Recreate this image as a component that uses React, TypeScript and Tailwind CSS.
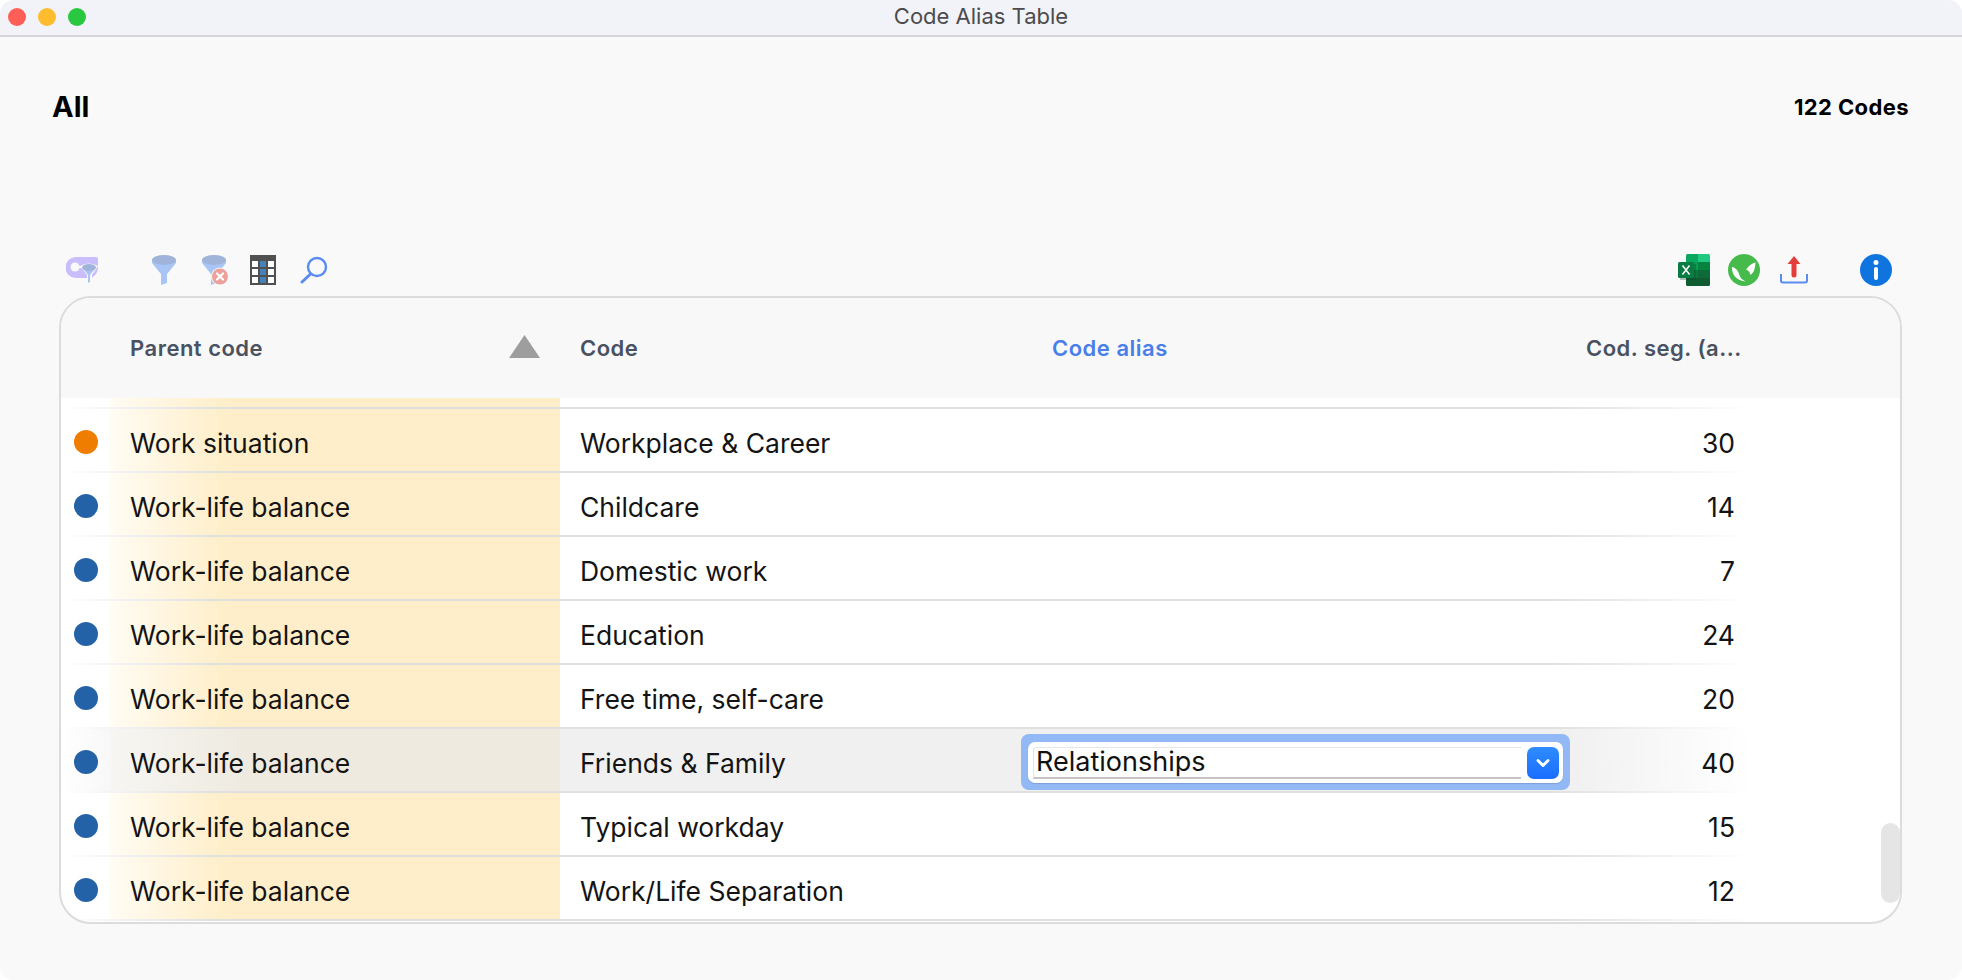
import { ChevronDown } from 'lucide-react'

const rows = [
  { parent: 'Work situation', code: 'Workplace & Career', count: 30, dot: 'bg-[#ef7d00]' },
  { parent: 'Work-life balance', code: 'Childcare', count: 14, dot: 'bg-[#2462a8]' },
  { parent: 'Work-life balance', code: 'Domestic work', count: 7, dot: 'bg-[#2462a8]' },
  { parent: 'Work-life balance', code: 'Education', count: 24, dot: 'bg-[#2462a8]' },
  { parent: 'Work-life balance', code: 'Free time, self-care', count: 20, dot: 'bg-[#2462a8]' },
  { parent: 'Work-life balance', code: 'Friends & Family', count: 40, dot: 'bg-[#2462a8]', alias: 'Relationships' },
  { parent: 'Work-life balance', code: 'Typical workday', count: 15, dot: 'bg-[#2462a8]' },
  { parent: 'Work-life balance', code: 'Work/Life Separation', count: 12, dot: 'bg-[#2462a8]' },
]

const line = 'h-[2px] w-[1690px] shrink-0 bg-[linear-gradient(to_right,#ffffff00,#e0e0e0_9%,#e0e0e0_88%,#ffffff00)]'
const yellow = 'bg-[linear-gradient(to_right,#fffcf3,#ffeec9_26%)]'

function AliasFilterIcon() {
  return (
    <svg width="32" height="26" viewBox="0 0 32 26">
      <path d="M10 0h20a2 2 0 0 1 2 2v8c0 6-4 11-9 11H10a10.500 10.500 0 0 1 0-21Z" fill="#c9bdfb" />
      <circle cx="9" cy="10" r="4.500" fill="#f9f9f9" />
      <path d="M9 10h8" stroke="#f9f9f9" strokeWidth="2" />
      <path d="M14 9q9-5 18 0l-6 9v7l-5 1v-8Z" fill="#f9f9f9" />
      <path d="M16 10.500h14l-6 7.500v7l-2 1v-8Z" fill="#a9c5f5" />
      <ellipse cx="23" cy="10.500" rx="7" ry="3.500" fill="#a0b4da" />
    </svg>
  )
}

function FunnelIcon() {
  return (
    <svg width="24" height="30" viewBox="0 0 24 30">
      <path d="M0 5h24v3L15 19v9l-6 2V19L0 8Z" fill="#a9c5f5" />
      <ellipse cx="12" cy="5" rx="12" ry="5" fill="#a0b4da" />
    </svg>
  )
}

function FunnelClearIcon() {
  return (
    <svg width="27" height="30" viewBox="0 0 27 30">
      <path d="M0 5h24v3L15 19v9l-6 2V19L0 8Z" fill="#a9c5f5" />
      <ellipse cx="12" cy="5" rx="12" ry="5" fill="#a0b4da" />
      <circle cx="18" cy="21.500" r="9" fill="#f9f9f9" />
      <circle cx="18" cy="21.500" r="8" fill="#eda09c" />
      <path d="M15 18.500l6 6m0-6-6 6" stroke="#fff" strokeWidth="2.200" strokeLinecap="round" />
    </svg>
  )
}

function GridIcon() {
  const cells = [0, 1, 2]
  return (
    <svg width="26" height="30" viewBox="0 0 26 30">
      <rect width="26" height="30" fill="#505050" />
      {cells.map(r => cells.map(c => (
        <rect key={`${r}-${c}`} x={2 + c * 8} y={6 + r * 8} width="6" height="6" fill={c === 1 ? '#4682b8' : '#fff'} />
      )))}
    </svg>
  )
}

function SearchIcon() {
  return (
    <svg width="28" height="28" viewBox="0 0 28 28" fill="none" stroke="#5a8cf0">
      <circle cx="17" cy="11" r="9" strokeWidth="2.400" />
      <path d="M10.500 18 2 26" strokeWidth="3" strokeLinecap="round" />
    </svg>
  )
}

function ExcelIcon() {
  return (
    <svg width="32" height="32" viewBox="0 0 32 32">
      <path d="M9.500 0H20v8H8V1.500A1.500 1.500 0 0 1 9.500 0Z" fill="#0aa760" />
      <path d="M20 0h10.500A1.500 1.500 0 0 1 32 1.500V8H20Z" fill="#1fc97f" />
      <rect x="8" y="8" width="12" height="8" fill="#0a9c55" />
      <rect x="20" y="8" width="12" height="8" fill="#07833f" />
      <rect x="8" y="16" width="12" height="8" fill="#0b7a40" />
      <rect x="20" y="16" width="12" height="8" fill="#0c6b38" />
      <path d="M8 24h24v6.500a1.500 1.500 0 0 1-1.500 1.500h-21A1.500 1.500 0 0 1 8 30.500Z" fill="#0f5c33" />
      <rect x="2" y="10" width="16" height="16" fill="#0b3f24" opacity="0.3" />
      <rect y="8" width="16" height="16" rx="1.500" fill="#0a7c43" />
      <path d="M4.500 11.500 11.500 20.500M11.500 11.500 4.500 20.500" stroke="#fff" strokeWidth="1.500" />
    </svg>
  )
}

function GlobeIcon() {
  return (
    <svg width="32" height="32" viewBox="0 0 32 32">
      <circle cx="16" cy="16" r="16" fill="#46bb4c" />
      <path d="M4 13c-.2 3.500.8 6.500 2.500 9 2.500 3 6 5 11 5.500-2.500-1.500-4.500-3-5.500-5-1-2.500-1.500-4.500-3-6.500C7.800 14.500 5.500 13 4 13Z" fill="#fff" />
      <path d="M27.500 8.500c-2.500.5-5 2-6.500 3.500-1 1-2 2.500-3 3.500.8.5 2 .8 3 2 .8 1 1.200 2.500 1.500 3.500 1.800-1.500 3-3 3.700-5 .8-2.500 1.200-5 1.300-7.500Z" fill="#fff" />
    </svg>
  )
}

function UploadIcon() {
  return (
    <svg width="28" height="30" viewBox="0 0 28 30" fill="none">
      <path d="M14 1 20.500 9H16.500v11a2.500 2.500 0 0 1-5 0V9H7.500Z" fill="#e33f3a" />
      <path d="M1 19v6.500a2 2 0 0 0 2 2h22a2 2 0 0 0 2-2V19" stroke="#5a8cf0" strokeWidth="2" />
    </svg>
  )
}

function InfoIcon() {
  return (
    <svg width="32" height="32" viewBox="0 0 32 32">
      <circle cx="16" cy="16" r="16" fill="#0f74de" />
      <circle cx="16" cy="8.500" r="2.500" fill="#fff" />
      <rect x="14" y="13" width="4" height="13" rx="2" fill="#fff" />
    </svg>
  )
}

function AliasEditor({ value }: { value: string }) {
  return (
    <div className="flex h-[56px] w-[549px] rounded-[8px] bg-[#93b8f6] p-[8px_7px]">
      <div className="flex h-[41px] w-full items-start gap-[6px] rounded-[7px] bg-white p-[5px_3px_0_5px] shadow-[0_1px_1px_#7f9fd6]">
        <div className="flex h-[32px] w-[488px] items-center rounded-tl-[3px] border-b-2 border-l border-t border-[#e6e6e6] border-b-[#c4c4c4] pb-[2px] pl-[2px] text-[27px] leading-none text-[#111]">{value}</div>
        <div className="flex h-[32px] w-[32px] items-center justify-center rounded-[7px] bg-gradient-to-b from-[#2f8cff] to-[#1a6dff]">
          <ChevronDown size={20} strokeWidth={3.500} className="text-white" />
        </div>
      </div>
    </div>
  )
}

export default function App() {
  return (
    <div className="flex h-[980px] w-[1962px] flex-col overflow-hidden rounded-[14px] bg-[#f9f9f9] [font-family:Inter,sans-serif]">
      {/* title bar */}
      <div className="relative flex h-[37px] shrink-0 items-center justify-center border-b-2 border-[#d6d6d8] bg-[#f2f3f8]">
        <div className="absolute left-[8px] top-[8px] flex gap-[12px]">
          <div className="h-[18px] w-[18px] rounded-full bg-[#ff5f57]" />
          <div className="h-[18px] w-[18px] rounded-full bg-[#febc2e]" />
          <div className="h-[18px] w-[18px] rounded-full bg-[#28c840]" />
        </div>
        <span className="pb-[2px] text-[22px] text-[#4c4c4c]">Code Alias Table</span>
      </div>

      <div className="flex items-start justify-between pl-[52px] pr-[53px] pt-[50px]">
        <span className="text-[29px] font-bold leading-[40px] text-black">All</span>
        <span className="text-[22px] font-bold leading-[40px] tracking-[0.4px] text-black">122 Codes</span>
      </div>

      {/* toolbar */}
      <div className="mt-[126px] flex h-[34px] w-[1892px] items-center">
        <div className="ml-[66px]"><AliasFilterIcon /></div>
        <div className="ml-[54px]"><FunnelIcon /></div>
        <div className="ml-[26px]"><FunnelClearIcon /></div>
        <div className="ml-[21px]"><GridIcon /></div>
        <div className="ml-[24px]"><SearchIcon /></div>
        <div className="ml-auto"><ExcelIcon /></div>
        <div className="ml-[18px]"><GlobeIcon /></div>
        <div className="ml-[20px]"><UploadIcon /></div>
        <div className="ml-[52px]"><InfoIcon /></div>
      </div>

      {/* table card */}
      <div className="relative ml-[59px] mt-[9px] h-[628px] w-[1843px] overflow-hidden rounded-[32px] border-2 border-[#dcdcdc] bg-white">
        <div className="flex h-[100px] items-center bg-[#f8f8f8] text-[22px] font-semibold tracking-[0.5px] text-[#4a5160]">
          <div className="flex w-[499px] items-center justify-between pl-[69px] pr-[20px]">
            <span>Parent code</span>
            <svg width="31" height="24" viewBox="0 0 31 24" className="-mt-[4px]"><path d="M15.500 1 31 24H0Z" fill="#9e9e9e" /></svg>
          </div>
          <div className="w-[461px] pl-[20px]">Code</div>
          <div className="w-[565px] pl-[31px] text-[#4a7ee8]">Code alias</div>
          <div className="w-[153px] whitespace-nowrap">Cod. seg. (a...</div>
        </div>

        <div className={`ml-[49px] h-[9px] w-[450px] ${yellow}`} />
        {rows.map(r => (
          <div key={r.code}>
            <div className={line} />
            <div className={`flex h-[62px] w-[1690px] items-center text-[26.5px] text-[#141414] ${r.alias ? 'bg-[linear-gradient(to_right,#ffffff,#f0f0f0_6%,#f0f0f0_89%,#ffffff)]' : ''}`}>
              <div className="flex h-full w-[49px] shrink-0 items-center justify-end pr-[12px] pt-[4px]">
                <div className={`h-[24px] w-[24px] rounded-full ${r.dot}`} />
              </div>
              <div className={`flex h-full w-[450px] shrink-0 items-center pl-[20px] pt-[7px] ${r.alias ? 'bg-[linear-gradient(to_right,#f7f6f3,#eeeae0_30%)]' : yellow}`}>{r.parent}</div>
              <div className="w-[461px] shrink-0 pl-[20px] pt-[7px]">{r.code}</div>
              <div className="w-[549px] shrink-0 pt-[4px]">{r.alias && <AliasEditor value={r.alias} />}</div>
              <div className="flex-1 pr-[16px] pt-[7px] text-right">{r.count}</div>
            </div>
          </div>
        ))}
        <div className={line} />

        {/* scrollbar */}
        <div className="absolute bottom-[19px] right-0 h-[80px] w-[19px] rounded-full bg-[#e5e5e5]" />
      </div>
    </div>
  )
}
